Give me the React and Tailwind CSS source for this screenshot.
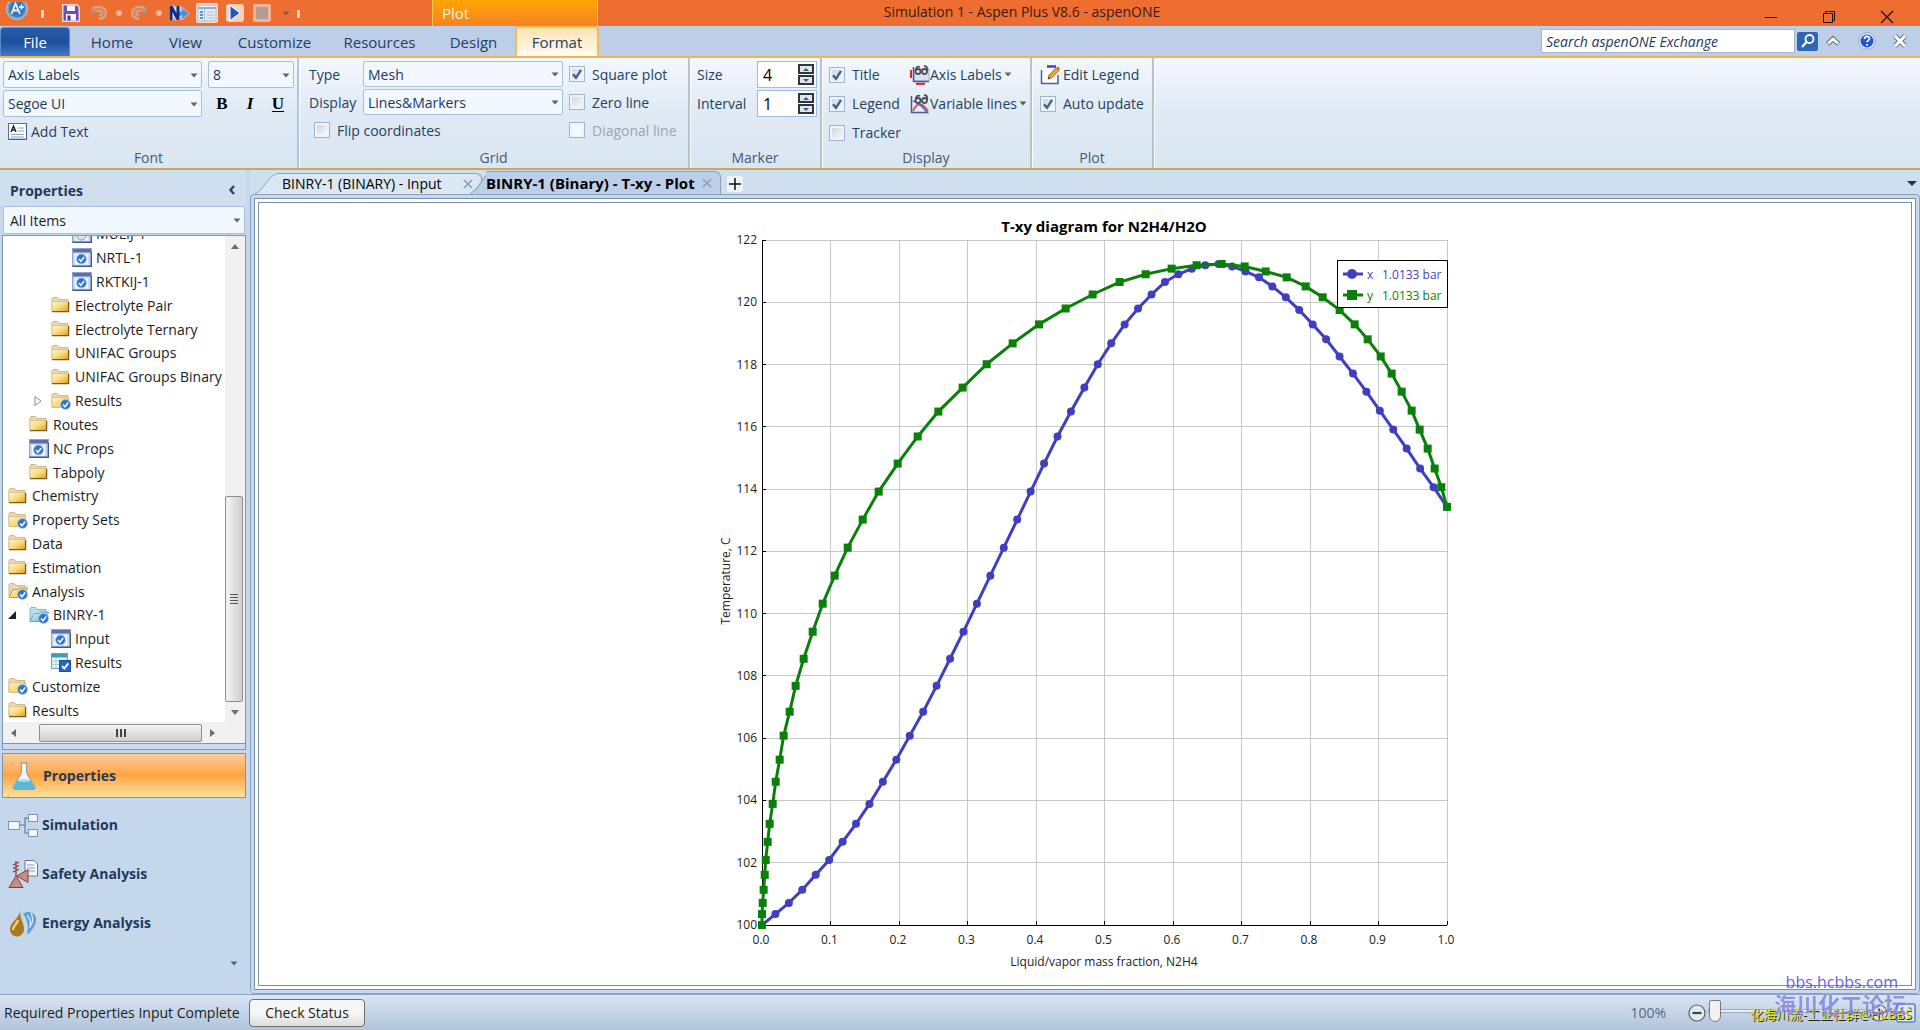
import React from "react";

/* ---------- plot data ---------- */
const TEMPS = [
  100, 100.35, 100.71, 101.13, 101.61, 102.09, 102.67, 103.25, 103.89, 104.6, 105.31, 106.08, 106.85,
  107.68, 108.55, 109.42, 110.32, 111.22, 112.12, 113.02, 113.92, 114.82, 115.69, 116.49, 117.26,
  118.01, 118.68, 119.29, 119.8, 120.25, 120.65, 120.9, 121.08, 121.19, 121.23, 121.15, 120.99,
  120.8, 120.51, 120.16, 119.75, 119.29, 118.81, 118.26, 117.71, 117.13, 116.52, 115.91, 115.3,
  114.66, 114.06, 113.43,
];
const Y_FRACTIONS = [
  0, 0, 0.001, 0.0024, 0.004, 0.0054, 0.0083, 0.0112, 0.0156, 0.02, 0.0258, 0.0316, 0.0404, 0.0491,
  0.0608, 0.074, 0.0886, 0.1061, 0.1251, 0.147, 0.1703, 0.1981, 0.2273, 0.2574, 0.2929, 0.328,
  0.3659, 0.4044, 0.4433, 0.4827, 0.5221, 0.5601, 0.598, 0.6345, 0.671, 0.7046, 0.7353, 0.766,
  0.7937, 0.8185, 0.8433, 0.8652, 0.8842, 0.9032, 0.9192, 0.9338, 0.9484, 0.9601, 0.9718, 0.982,
  0.9917, 1,
];
const LEFT = 42;
const TOP = 37;
const SIDE = 685;
const px = (f) => LEFT + f * SIDE;
const py = (t) => TOP + ((122 - t) / 22) * SIDE;
const LIQUID = TEMPS.map((t, i) => [px(i / 51), py(t)]);
const VAPOR = TEMPS.map((t, i) => [px(Y_FRACTIONS[i]), py(t)]);
const toPoints = (s) => s.map((p) => p.join(",")).join(" ");
const TICKS_X = [0, 1, 2, 3, 4, 5, 6, 7, 8, 9, 10];
const TICKS_Y = [100, 102, 104, 106, 108, 110, 112, 114, 116, 118, 120, 122];

function Chart() {
  return (
    <svg viewBox="0 0 730 782" className="h-full w-full" role="img" aria-label="T-xy diagram for N2H4/H2O">
      <text x="384" y="29" textAnchor="middle" fontSize="15" fontWeight="700" fill="#000">
        T-xy diagram for N2H4/H2O
      </text>
      <g stroke="#c8c8c8" strokeWidth="1" shapeRendering="crispEdges">
        {TICKS_X.slice(1).map((n) => (
          <line key={n} x1={px(n / 10)} x2={px(n / 10)} y1={TOP} y2={TOP + SIDE} />
        ))}
        {TICKS_Y.slice(1).map((t) => (
          <line key={t} x1={LEFT} x2={LEFT + SIDE} y1={py(t)} y2={py(t)} />
        ))}
      </g>
      <g stroke="#000" strokeWidth="1" shapeRendering="crispEdges">
        <line x1={LEFT} x2={LEFT} y1={TOP} y2={TOP + SIDE} />
        <line x1={LEFT} x2={LEFT + SIDE} y1={TOP + SIDE} y2={TOP + SIDE} />
        {TICKS_X.map((n) => (
          <line key={n} x1={px(n / 10)} x2={px(n / 10)} y1={TOP + SIDE - 4} y2={TOP + SIDE} />
        ))}
        {TICKS_Y.map((t) => (
          <line key={t} x1={LEFT} x2={LEFT + 4} y1={py(t)} y2={py(t)} />
        ))}
      </g>
      <g fontSize="12" fill="#222">
        {TICKS_Y.map((t) => (
          <text key={t} x={LEFT - 5} y={py(t) + 4} textAnchor="end">
            {t}
          </text>
        ))}
        {TICKS_X.map((n) => (
          <text key={n} x={px(n / 10) - 1} y={TOP + SIDE + 19} textAnchor="middle">
            {(n / 10).toFixed(1)}
          </text>
        ))}
      </g>
      <text x="384" y="763" textAnchor="middle" fontSize="12" fill="#222">
        Liquid/vapor mass fraction, N2H4
      </text>
      <text transform="translate(10 378) rotate(-90)" textAnchor="middle" fontSize="12" fill="#222">
        Temperature, C
      </text>
      <g fill="#3f3fbf" stroke="none">
        <polyline points={toPoints(LIQUID)} fill="none" stroke="#3f3fbf" strokeWidth="3" />
        {LIQUID.map(([x, y], i) => (
          <circle key={i} cx={x} cy={y} r="4" />
        ))}
      </g>
      <g fill="#0a800a">
        <polyline points={toPoints(VAPOR)} fill="none" stroke="#0a800a" strokeWidth="3" />
        {VAPOR.map(([x, y], i) => (
          <rect key={i} x={x - 4} y={y - 4} width="8" height="8" />
        ))}
      </g>
      <rect x="617.5" y="57.5" width="110" height="47" fill="#fff" stroke="#000" />
      <g strokeWidth="3" fontSize="12">
        <line x1="623" x2="643" y1="71" y2="71" stroke="#3f3fbf" />
        <circle cx="632" cy="71" r="5" fill="#3f3fbf" />
        <text x="647" y="76" fill="#3f3fbf">x</text>
        <text x="662" y="76" fill="#3f3fbf">1.0133 bar</text>
        <line x1="623" x2="643" y1="92" y2="92" stroke="#0a800a" />
        <rect x="627" y="87" width="10" height="10" fill="#0a800a" />
        <text x="647" y="97" fill="#0a800a">y</text>
        <text x="662" y="97" fill="#0a800a">1.0133 bar</text>
      </g>
    </svg>
  );
}

/* ---------- small controls ---------- */
function Arrow({ className = "" }) {
  return (
    <svg viewBox="0 0 8 5" className={"h-[5px] w-2 " + className} aria-hidden="true">
      <path d="M0.5 0.5h7L4 4.5z" fill="currentColor" />
    </svg>
  );
}

function Combo({ label, value, className, text = "pl-1 text-[#1e395b]" }) {
  return (
    <div className={"relative " + className}>
      <select
        aria-label={label}
        defaultValue={value}
        className={"h-full w-full appearance-none rounded-xs border border-[#a9bfdb] bg-[#f1f8fe] " + text}
      >
        <option>{value}</option>
      </select>
      <Arrow className="pointer-events-none absolute right-1 top-1/2 -mt-0.5 text-[#5a6472]" />
    </div>
  );
}

function Check({ label, checked = false, disabled = false, className = "" }) {
  return (
    <label className={"flex items-center gap-[7px] whitespace-nowrap " + (disabled ? "text-[#9aa5b3] " : "") + className}>
      <span className="relative flex h-4 w-4 items-center justify-center">
        <input
          type="checkbox"
          defaultChecked={checked}
          disabled={disabled}
          className="peer h-4 w-4 appearance-none border border-[#9fb4cf] bg-linear-to-br from-[#c9d1da] to-white shadow-[inset_0_0_0_2px_#eef4fa] disabled:bg-none disabled:bg-[#f5f7f9]"
        />
        <svg viewBox="0 0 16 16" className="pointer-events-none absolute hidden h-4 w-4 peer-checked:block" aria-hidden="true">
          <path d="M4 8.2 7 11.8 12 3.8" fill="none" stroke="#3f6290" strokeWidth="2.4" />
        </svg>
      </span>
      {label}
    </label>
  );
}

function Spin({ label, value }) {
  return (
    <div className="flex h-[27px] w-[60px] border border-[#9dbbe0] bg-white">
      <input
        aria-label={label}
        defaultValue={value}
        className="min-w-0 flex-1 bg-transparent pl-[5px] text-base text-black outline-none"
      />
      <div className="mr-0.5 flex w-4 shrink-0 flex-col justify-between py-0.5">
        {["M1 4 4 1l3 3z", "M1 1h6L4 4z"].map((d, i) => (
          <button
            key={d}
            aria-label={label + (i ? " down" : " up")}
            className="flex h-2.5 w-4 items-center justify-center border-2 border-[#2c3540] bg-[#dfe6ee]"
          >
            <svg viewBox="0 0 8 5" className="h-[5px] w-2 shrink-0">
              <path d={d} fill="#4d5866" />
            </svg>
          </button>
        ))}
      </div>
    </div>
  );
}

function Group({ title, className, children }) {
  return (
    <section
      aria-label={title}
      className={"flex shrink-0 flex-col border-r-2 border-[#b4c3d6] shadow-[1px_0_0_#fbfdff] " + className}
    >
      <div className="flex-1">{children}</div>
      <div className="h-5 text-center leading-5 text-[#46597a]">{title}</div>
    </section>
  );
}

/* ---------- icons ---------- */
function Folder({ open, checked, blue }) {
  const id = blue ? "folderBlue" : checked ? "folderPale" : "folderGold";
  return (
    <svg viewBox="0 0 20 18" className="h-[18px] w-5" aria-hidden="true">
      <defs>
        <linearGradient id={id} x1="0" y1="0" x2="1" y2="1">
          <stop offset="0" stopColor={blue ? "#d8f2f8" : "#fff6d0"} />
          <stop offset="0.5" stopColor={blue ? "#9fd6e6" : "#fadb7c"} />
          <stop offset="1" stopColor={blue ? "#57a5bd" : checked ? "#ecc75c" : "#e29c14"} />
        </linearGradient>
      </defs>
      <path d="M1 15V2.500l1-1h4.500l1.500 2h9V15z" fill={blue ? "#b9e0ea" : "#e6d9b4"} stroke={blue ? "#6fa9bb" : "#c0ad7e"} strokeWidth="0.800" />
      {open ? (
        <path d="M1 15.500 5 7.500h5l1-1.500h8.500l-3 9.500z" fill={"url(#" + id + ")"} stroke={blue ? "#5c9cb0" : "#b08c3c"} strokeWidth="0.800" />
      ) : (
        <path d="M1 15.500V5.500h16.500v10z" fill={"url(#" + id + ")"} stroke="#cbb06c" strokeWidth="0.600" />
      )}
      {!open && !checked && <path d="M1 15.700h16.600V6" fill="none" stroke="#7c5c1a" strokeWidth="1.300" />}
      {checked && <CheckDot cx={14.5} cy={12.5} />}
    </svg>
  );
}

function CheckDot({ cx, cy }) {
  return (
    <g>
      <circle cx={cx} cy={cy} r="5" fill="#2f74cf" stroke="#a9c9ef" strokeWidth="0.8" />
      <path d={`M${cx - 2.5} ${cy} l2 2.300 3.200-4.300`} fill="none" stroke="#fff" strokeWidth="1.500" />
    </g>
  );
}

function FormIcon({ muted }) {
  return (
    <svg viewBox="0 0 20 19" className="h-[19px] w-5" aria-hidden="true">
      <rect x="0.500" y="0.500" width="19" height="18" fill="#c9d9f2" stroke="#8fa3cb" />
      <rect x="1" y="1" width="18" height="3.500" fill="#5f6fae" />
      <path d="M0.500 18.300h18.800V4" fill="none" stroke="#3f5a8a" strokeWidth="1.400" />
      <rect x="3" y="6" width="13" height="10.500" fill="#f4f8ff" />
      {muted ? <circle cx="9.500" cy="11" r="5" fill="#e2e2e2" stroke="#9a9a9a" /> : <CheckDot cx={9.5} cy={11} />}
    </svg>
  );
}

function TableIcon() {
  return (
    <svg viewBox="0 0 20 19" className="h-[19px] w-5" aria-hidden="true">
      <rect x="0.500" y="0.500" width="16" height="15" fill="#e6f6f8" stroke="#6fa2b4" />
      <rect x="1" y="1" width="15" height="3.500" fill="#3f9fae" />
      <path d="M5 4v11M1 8h15M1 11.500h15" stroke="#a9d0da" />
      <rect x="8.500" y="7.500" width="11" height="11" fill="#2668c0" stroke="#1b4f9a" />
      <path d="m11 13 2.300 2.600 4-5.200" fill="none" stroke="#fff" strokeWidth="1.800" />
    </svg>
  );
}

/* ---------- title bar ---------- */
function QuickAccess() {
  const btn = "flex h-[22px] items-center justify-center";
  return (
    <div className="flex h-full w-[432px] shrink-0 items-center">
      <button aria-label="Application menu" className={btn + " w-[34px]"}>
        <svg viewBox="0 0 24 22" className="h-[22px] w-6">
          <circle cx="12" cy="7" r="10.500" fill="#6f9fca" stroke="#b3cfe6" />
          <circle cx="12" cy="7" r="8" fill="#3d78b4" />
          <path d="M6.500 12 10.500 1.500l4.500 10.500M8 8.500h5" fill="none" stroke="#e8f3fb" strokeWidth="1.800" />
          <path d="M16.500 2.500v5M14 5h5" stroke="#fff" strokeWidth="1.400" />
        </svg>
      </button>
      <span className="mb-2 ml-[7px] h-2 w-[3px] self-end bg-[#f6d9cb]" />
      <button aria-label="Save" className={btn + " ml-[17px] w-5"}>
        <svg viewBox="0 0 20 20" className="h-5 w-5">
          <path d="M1 1h15l3 3v15H1z" fill="#f8d9cc" />
          <path d="M2.500 2.500h13l2 2v13h-15z" fill="#6a4fb4" />
          <path d="M6 2.500h8V8H6z" fill="#f4f2fc" />
          <path d="M5 11h10v6.500H5z" fill="#f7f7fc" />
          <path d="M6.500 12.500h3v5h-3z" fill="#4a3596" />
        </svg>
      </button>
      <button aria-label="Undo" className={btn + " ml-2 w-5"}>
        <svg viewBox="0 0 20 20" className="h-5 w-5">
          <path d="M4 8c4-4 11-2 11 2 0 3-3 4-5 4" fill="none" stroke="#f39b75" strokeWidth="6" />
          <path d="M4 8c4-4 11-2 11 2 0 3-3 4-5 4M3 4v5h5" fill="none" stroke="#b5907f" strokeWidth="2.200" />
        </svg>
      </button>
      <span className="ml-2 h-1 w-1 rounded-full bg-[#f3c5b0] ring-1 ring-[#f3a585]" />
      <button aria-label="Redo" className={btn + " ml-2 w-5"}>
        <svg viewBox="0 0 20 20" className="h-5 w-5">
          <path d="M16 8C12 4 5 6 5 10c0 3 3 4 5 4" fill="none" stroke="#f39b75" strokeWidth="6" />
          <path d="M16 8C12 4 5 6 5 10c0 3 3 4 5 4M17 4v5h-5" fill="none" stroke="#b5907f" strokeWidth="2.200" />
        </svg>
      </button>
      <span className="ml-2 h-1 w-1 rounded-full bg-[#f3c5b0] ring-1 ring-[#f3a585]" />
      <button aria-label="Next" className={btn + " ml-2 w-5"}>
        <svg viewBox="0 0 20 20" className="h-5 w-5">
          <path d="M2 17.500V3l7 13.500V3" fill="none" stroke="#f8d8cc" strokeWidth="5.500" />
          <path d="M9 8h4V4l7 6.500-7 6.500v-4H9z" fill="#4b8fe0" stroke="#d4e6fa" strokeWidth="0.700" />
          <path d="M2 17.500V3l7 13.500V3" fill="none" stroke="#0b2f86" strokeWidth="3" />
        </svg>
      </button>
      <button aria-label="Control panel" className={btn + " ml-[7px] w-[22px]"}>
        <svg viewBox="0 0 22 20" className="h-5 w-[22px]">
          <rect x="0" y="0" width="22" height="20" rx="2" fill="#fbd9ca" />
          <rect x="2" y="2" width="18" height="16" fill="#e3edf6" stroke="#a7bdd4" />
          <path d="M2 5h18" stroke="#8fb0d4" strokeWidth="2" />
          <path d="M8.500 6v12M11 9h7M11 12h7M11 15h7" stroke="#a9bccf" />
          <path d="M4 9h3M4 12h3M4 15h3" stroke="#3f6fae" strokeWidth="1.500" />
        </svg>
      </button>
      <button aria-label="Run" className={btn + " ml-[7px] w-5"}>
        <svg viewBox="0 0 20 22" className="h-[22px] w-5">
          <rect x="1" y="2" width="18" height="18" rx="3" fill="#f8d0be" />
          <path d="M5 3.500 15 11 5 18.500z" fill="#1f56c8" stroke="#fff" strokeWidth="1" />
        </svg>
      </button>
      <button aria-label="Stop" className={btn + " ml-[7px] w-5"}>
        <svg viewBox="0 0 20 20" className="h-5 w-5">
          <rect x="1" y="1" width="18" height="18" rx="2" fill="#f3b59a" />
          <rect x="4" y="4" width="12" height="12" fill="#b39c92" />
        </svg>
      </button>
      <button aria-label="Customize toolbar" className={btn + " ml-2 w-3 text-[#9c5534]"}>
        <Arrow />
      </button>
      <span className="mb-2 ml-[5px] h-2 w-[3px] self-end bg-[#f6d9cb]" />
    </div>
  );
}

function TitleBar() {
  const btn = "flex h-full w-[58px] items-end justify-center pb-0.5";
  return (
    <header className="flex h-[26px] shrink-0 bg-[#ee6e31]">
      <QuickAccess />
      <div className="w-[166px] shrink-0 border-x border-[#ffc845] bg-linear-to-b from-[#ffa500] to-[#f58220] pl-[9px] text-[15px] leading-[26px] text-[#fff3dc]">
        Plot
      </div>
      <h1 className="flex-1 whitespace-nowrap pr-[296px] text-center text-[14px] leading-6 text-[#3a1a0c]">
        Simulation 1 - Aspen Plus V8.6 - aspenONE
      </h1>
      <div className="flex pr-1">
        <button aria-label="Minimize" className={btn}>
          <svg viewBox="0 0 14 14" className="h-3.5 w-3.5"><path d="M1 7.500h12" stroke="#1a0a04" /></svg>
        </button>
        <button aria-label="Restore" className={btn}>
          <svg viewBox="0 0 14 14" className="h-3.5 w-3.5">
            <path d="M1.500 3.500h9v9h-9zM3.500 3.500v-2h9v9h-2" fill="none" stroke="#1a0a04" />
          </svg>
        </button>
        <button aria-label="Close window" className={btn}>
          <svg viewBox="0 0 14 14" className="h-3.5 w-3.5"><path d="m1 1 12 12M13 1 1 13" stroke="#1a0a04" strokeWidth="1.200" /></svg>
        </button>
      </div>
    </header>
  );
}

function TabRow() {
  const tab = "h-full pt-0.5 text-center";
  return (
    <nav className="flex h-[30px] shrink-0 items-stretch bg-[#bdcee8] text-[15px] text-[#26405f]">
      <button className="mt-[1px] w-[70px] rounded-t-sm border border-b-0 border-[#5e8ccb] bg-linear-to-b from-[#2a5ca8] via-[#1d4f9d] to-[#3f7cc8] text-white">
        File
      </button>
      <button className={tab + " ml-1 w-[76px]"}>Home</button>
      <button className={tab + " w-[71px]"}>View</button>
      <button className={tab + " w-[107px]"}>Customize</button>
      <button className={tab + " w-[103px]"}>Resources</button>
      <button className={tab + " w-[84px] border-l border-[#d9cbb0]"}>Design</button>
      <button className="h-full w-[84px] rounded-t-sm border-2 border-b-0 border-[#f3bd55] bg-linear-to-b from-[#fbe3ae] to-[#fdfbf4] text-center">
        Format
      </button>
      <div className="flex flex-1 items-center justify-end gap-0.5 pr-3">
        <input
          aria-label="Search aspenONE Exchange"
          placeholder="Search aspenONE Exchange"
          className="h-6 w-[254px] border border-[#a9b6c6] bg-white pl-1 text-[14px] italic text-[#1e395b] placeholder:text-[#1e395b]"
        />
        <button aria-label="Search" className="flex h-[19px] w-[21px] items-center justify-center rounded-xs bg-[#2e68b4]">
          <svg viewBox="0 0 16 16" className="h-4 w-4">
            <circle cx="9.500" cy="6" r="4" fill="none" stroke="#fff" strokeWidth="1.800" />
            <path d="M6.500 9 2 14" stroke="#fff" strokeWidth="2.200" />
          </svg>
        </button>
        <button aria-label="Collapse ribbon" className="ml-1.5 flex w-3.5 justify-center">
          <svg viewBox="0 0 14 12" className="h-3 w-3.5 shrink-0">
            <path d="m1.500 9 5.500-5 5.500 5" fill="none" stroke="#6d7785" strokeWidth="5" />
            <path d="m2 8.500 5-4.500 5 4.500" fill="none" stroke="#fff" strokeWidth="2.500" />
          </svg>
        </button>
        <button aria-label="Help" className="ml-4 flex">
          <svg viewBox="0 0 18 18" className="h-[18px] w-[18px]">
            <circle cx="9" cy="9" r="8.300" fill="#e4edf8" stroke="#8fa9cf" />
            <circle cx="9" cy="9" r="6.500" fill="#2456d0" />
            <path d="M6.500 7c0-3.500 5-3.300 5-.4 0 1.800-2.400 1.800-2.400 3.700M9.100 12v1.700" fill="none" stroke="#fff" strokeWidth="1.700" />
          </svg>
        </button>
        <button aria-label="Close document" className="ml-3.5 flex">
          <svg viewBox="0 0 16 14" className="h-3.5 w-4">
            <path d="m3 2 10 10M13 2 3 12" stroke="#6d7785" strokeWidth="5" />
            <path d="m3 2 10 10M13 2 3 12" stroke="#fff" strokeWidth="3" />
          </svg>
        </button>
      </div>
    </nav>
  );
}

/* ---------- ribbon ---------- */
function Glasses() {
  return (
    <g fill="#e8ecf2" stroke="#4a4f58" strokeWidth="1.800">
      <circle cx="8" cy="6.500" r="2.500" />
      <circle cx="14.500" cy="6.500" r="2.500" />
      <path d="M6 5c0-3 2-4 4-3M17 5.500c1-3-1-5-3-4" fill="none" />
    </g>
  );
}

function Ribbon() {
  const sel = "h-[27px]";
  return (
    <div className="flex h-[114px] shrink-0 border-y-2 border-t-[#eeb64b] border-b-[#cfa653] bg-linear-to-b from-[#f2f8fe] via-[#dfeaf5] to-[#dbe6f3] text-[14px] text-[#26405f]">
      <Group title="Font" className="w-[299px]">
        <div className="grid grid-cols-[199px_86px] gap-x-[6px] gap-y-0.5 pl-[3px] pt-[3px]">
          <Combo label="Text element" value="Axis Labels" className={sel} />
          <Combo label="Font size" value="8" className={sel} />
          <Combo label="Font family" value="Segoe UI" className={sel} />
          <div className="flex items-center justify-around pr-0.5 font-['Liberation_Serif'] text-[17px] font-bold text-black">
            <button aria-label="Bold" className="w-6">B</button>
            <button aria-label="Italic" className="w-6 italic">I</button>
            <button aria-label="Underline" className="w-6 underline underline-offset-2">U</button>
          </div>
        </div>
        <button className="ml-2 mt-[3px] flex h-[22px] items-center gap-1">
          <svg viewBox="0 0 19 17" className="h-[17px] w-[19px]" aria-hidden="true">
            <rect x="0.500" y="0.500" width="18" height="16" fill="#fff" stroke="#54719c" />
            <path d="m3 9 2.500-6L8 9M4 7h3" fill="none" stroke="#222" strokeWidth="1.400" />
            <path d="M10 5h6M10 8h6M3 11.500h13M3 14h13" stroke="#8ba2c4" />
            <path d="M1 16.200h17.500V1" fill="none" stroke="#3f5a86" />
          </svg>
          Add Text
        </button>
      </Group>
      <Group title="Grid" className="w-[391px]">
        <div className="flex gap-1.5 pl-2.5 pt-[3px]">
          <div className="flex flex-col gap-0.5">
            <div className="flex h-[26px] items-center">
              <span className="w-[54px]">Type</span>
              <Combo label="Type" value="Mesh" className="h-[26px] w-[200px]" />
            </div>
            <div className="flex h-[26px] items-center">
              <span className="w-[54px]">Display</span>
              <Combo label="Display" value="Lines&amp;Markers" className="h-[26px] w-[200px]" />
            </div>
            <Check label="Flip coordinates" className="ml-[5px] h-[26px]" />
          </div>
          <div className="flex flex-col gap-0.5">
            <Check label="Square plot" checked className="h-[26px]" />
            <Check label="Zero line" className="h-[26px]" />
            <Check label="Diagonal line" disabled className="h-[26px]" />
          </div>
        </div>
      </Group>
      <Group title="Marker" className="w-[132px]">
        <div className="flex flex-col gap-0.5 pl-[7px] pt-[3px]">
          <div className="flex items-center"><span className="w-[60px]">Size</span><Spin label="Size" value="4" /></div>
          <div className="flex items-center"><span className="w-[60px]">Interval</span><Spin label="Interval" value="1" /></div>
        </div>
      </Group>
      <Group title="Display" className="w-[210px]">
        <div className="grid grid-cols-[81px_1fr] gap-y-0.5 pl-[7px] pt-[3px]">
          <Check label="Title" checked className="h-[27px]" />
          <button className="flex h-[27px] items-center whitespace-nowrap">
            <svg viewBox="0 0 20 20" className="h-5 w-5 shrink-0" aria-hidden="true">
              <rect x="4" y="4" width="15" height="12" fill="#d9e0f0" stroke="#a3aecb" />
              <path d="M1 5v8" stroke="#e02020" strokeWidth="2" />
              <path d="M6 18.800h9" stroke="#e02020" strokeWidth="2" />
              <path d="M3.500 2v14.500H19" fill="none" stroke="#4a5890" strokeWidth="1.500" />
              <Glasses />
            </svg>
            Axis Labels
            <Arrow className="ml-0.5 text-[#5f6b52]" />
          </button>
          <Check label="Legend" checked className="h-[27px]" />
          <button className="flex h-[27px] items-center whitespace-nowrap">
            <svg viewBox="0 0 20 20" className="h-5 w-5 shrink-0" aria-hidden="true">
              <rect x="1" y="2" width="17" height="16" fill="#e9edf8" />
              <path d="M3 17C7 8 12 8 18 17" fill="none" stroke="#e05050" strokeWidth="1.800" />
              <path d="M3 7c5 1 9 5 14 11" fill="none" stroke="#4a62c8" strokeWidth="1.500" />
              <path d="M1.500 2v16.500h17" fill="none" stroke="#4a5890" strokeWidth="1.500" />
              <Glasses />
            </svg>
            Variable lines
            <Arrow className="ml-0.5 text-[#4f6b2f]" />
          </button>
          <Check label="Tracker" className="h-[27px]" />
        </div>
      </Group>
      <Group title="Plot" className="w-[122px]">
        <div className="flex flex-col gap-0.5 pl-2 pt-[3px]">
          <button className="flex h-[27px] items-center gap-[3px] whitespace-nowrap">
            <svg viewBox="0 0 20 20" className="h-5 w-5" aria-hidden="true">
              <rect x="1" y="3" width="16" height="15" fill="#fbfcff" />
              <path d="M1.500 5v13.500H18V10" fill="none" stroke="#4a5ea8" strokeWidth="1.500" />
              <path d="M7 1.500h9" stroke="#2f45d8" strokeWidth="2.500" />
              <path d="m8 14 1-4 7-7 3 2.500-7.500 7.500z" fill="#f0a03c" stroke="#9a5a20" strokeWidth="0.800" />
              <path d="m16 3 3 2.500 1-2-2-2z" fill="#d86050" />
              <path d="m8 14 .6-2 1.500 1.300z" fill="#222" />
            </svg>
            Edit Legend
          </button>
          <Check label="Auto update" checked className="h-[27px]" />
        </div>
      </Group>
    </div>
  );
}

/* ---------- sidebar ---------- */
const TREE = [
  { level: 3, icon: <FormIcon muted />, label: "MULIJ-1" },
  { level: 3, icon: <FormIcon />, label: "NRTL-1" },
  { level: 3, icon: <FormIcon />, label: "RKTKIJ-1" },
  { level: 2, icon: <Folder />, label: "Electrolyte Pair" },
  { level: 2, icon: <Folder />, label: "Electrolyte Ternary" },
  { level: 2, icon: <Folder />, label: "UNIFAC Groups" },
  { level: 2, icon: <Folder />, label: "UNIFAC Groups Binary" },
  { level: 2, icon: <Folder checked />, label: "Results", expander: "closed" },
  { level: 1, icon: <Folder />, label: "Routes" },
  { level: 1, icon: <FormIcon />, label: "NC Props" },
  { level: 1, icon: <Folder />, label: "Tabpoly" },
  { level: 0, icon: <Folder />, label: "Chemistry" },
  { level: 0, icon: <Folder checked />, label: "Property Sets" },
  { level: 0, icon: <Folder />, label: "Data" },
  { level: 0, icon: <Folder />, label: "Estimation" },
  { level: 0, icon: <Folder checked open />, label: "Analysis" },
  { level: 1, icon: <Folder checked open blue />, label: "BINRY-1", expander: "open" },
  { level: 2, icon: <FormIcon />, label: "Input" },
  { level: 2, icon: <TableIcon />, label: "Results" },
  { level: 0, icon: <Folder checked />, label: "Customize" },
  { level: 0, icon: <Folder />, label: "Results" },
];
const INDENT = ["pl-[5px]", "pl-1", "pl-[26px]", "pl-[47px]"];

function TreeRow({ level, icon, label, expander }) {
  return (
    <li className={"flex min-h-0 flex-1 items-center whitespace-nowrap " + INDENT[level]}>
      {level > 0 && (
        <span className={"flex w-[22px] " + (expander === "open" ? "justify-start" : "pl-1")}>
          {expander && (
            <button aria-label={"Toggle " + label}>
              <svg viewBox="0 0 10 10" className="h-2.5 w-2.5">
                {expander === "open" ? (
                  <path d="M9 1v8H1z" fill="#222" />
                ) : (
                  <path d="M2 0.500v9l6-4.500z" fill="#fff" stroke="#8a8a8a" />
                )}
              </svg>
            </button>
          )}
        </span>
      )}
      <button className="flex items-center gap-1">
        {icon}
        {label}
      </button>
    </li>
  );
}

function Sidebar() {
  const nav = "flex h-[45px] w-full items-center gap-1 pl-1.5 text-left";
  const scrollBtn = "flex h-5 w-5 shrink-0 items-center justify-center";
  return (
    <aside className="flex w-[250px] shrink-0 flex-col bg-[#c5d7eb] pr-1">
      <div className="flex h-9 shrink-0 items-center justify-between bg-[#cfdfee] pl-2.5 pr-2.5 pt-1">
        <h2 className="text-[14px] font-bold text-[#1e395b]">Properties</h2>
        <button aria-label="Collapse pane">
          <svg viewBox="0 0 8 10" className="h-2.5 w-2"><path d="M6 1 2.500 5 6 9" fill="none" stroke="#39424f" strokeWidth="2.400" /></svg>
        </button>
      </div>
      <Combo label="Items" value="All Items" className="ml-[3px] h-7 w-[242px] shrink-0 text-[14px]" text="pl-1.5 text-[#1c1c1c]" />
      <div className="ml-0.5 mt-[1px] flex min-h-0 flex-1 flex-col border border-[#7f97b5] bg-[#f1f1f1] text-[14px] text-[#1c1c1c]">
        <div className="flex min-h-0 flex-1">
          <div className="flex min-w-0 flex-1 flex-col overflow-hidden bg-white">
            <ul className="-mt-3.5 flex min-h-0 flex-1 flex-col">
              {TREE.map((n, i) => (
                <TreeRow key={i} {...n} />
              ))}
            </ul>
          </div>
          <div className="flex w-5 flex-col items-center">
            <button aria-label="Scroll up" className={scrollBtn}>
              <svg viewBox="0 0 8 5" className="h-[5px] w-2"><path d="M4 0 8 5H0z" fill="#6d6d6d" /></svg>
            </button>
            <div className="flex min-h-0 w-full flex-1 flex-col">
              <div className="flex-[240]" />
              <div className="flex w-[18px] flex-[204] flex-col items-center justify-center gap-0.5 rounded-xs border border-[#8e8e8e] bg-linear-to-r from-[#f4f4f4] to-[#cfcfcf]">
                <i className="h-px w-2 bg-[#555]" />
                <i className="h-px w-2 bg-[#555]" />
                <i className="h-px w-2 bg-[#555]" />
                <i className="h-px w-2 bg-[#555]" />
              </div>
            </div>
            <button aria-label="Scroll down" className={scrollBtn}>
              <svg viewBox="0 0 8 5" className="h-[5px] w-2"><path d="M0 0h8L4 5z" fill="#6d6d6d" /></svg>
            </button>
          </div>
        </div>
        <div className="flex h-[21px] shrink-0 items-center pr-[23px]">
          <button aria-label="Scroll left" className={scrollBtn}>
            <svg viewBox="0 0 5 8" className="h-2 w-[5px]"><path d="M5 0v8L0 4z" fill="#6d6d6d" /></svg>
          </button>
          <div className="ml-4 flex h-[18px] flex-1 items-center justify-center gap-0.5 rounded-xs border border-[#8e8e8e] bg-linear-to-b from-[#f4f4f4] to-[#cfcfcf]">
            <i className="h-2 w-0.5 bg-[#444]" />
            <i className="h-2 w-0.5 bg-[#444]" />
            <i className="h-2 w-0.5 bg-[#444]" />
          </div>
          <button aria-label="Scroll right" className={scrollBtn}>
            <svg viewBox="0 0 5 8" className="h-2 w-[5px]"><path d="M0 0v8l5-4z" fill="#6d6d6d" /></svg>
          </button>
        </div>
      </div>
      <div className="ml-0.5 h-[6px] shrink-0 border border-t-0 border-[#7f97b5] bg-[#cbdcf0]" />
      <nav className="ml-0.5 mt-[3px] flex h-[241px] shrink-0 flex-col gap-1 text-[14px] font-bold text-[#1e395b]">
        <button className={nav + " border border-[#7d94ad] bg-linear-to-b from-[#fccb9d] from-0% via-[#fea63e] via-50% to-[#fee09a] to-100%"}>
          <svg viewBox="0 0 30 30" className="h-[30px] w-[30px]" aria-hidden="true">
            <path d="M11 2h8M12.500 3v9L4 26c0 2 1 2.500 2 2.500h18c1.500 0 2.500-1 2-2.500L17.500 12V3" fill="#f3f6f8" stroke="#8e9aa3" />
            <path d="M8.500 19h13l4.500 8c0 1-1 1.500-2 1.500H6c-1 0-2-.5-2-1.500z" fill="#59b9d6" />
            <ellipse cx="15" cy="19.500" rx="6.300" ry="1.500" fill="#a5e1f0" />
          </svg>
          Properties
        </button>
        <button className={nav}>
          <svg viewBox="0 0 30 30" className="h-[30px] w-[30px]" aria-hidden="true">
            <g fill="#f2f6fc" stroke="#7c93b8">
              <path d="M11 15h6M22 8h-5v15h5" fill="none" strokeWidth="1.600" />
              <rect x="0.500" y="11.500" width="11" height="8" />
              <rect x="20.500" y="4.500" width="9" height="7" />
              <rect x="20.500" y="19.500" width="9" height="7" />
            </g>
          </svg>
          Simulation
        </button>
        <button className={nav}>
          <svg viewBox="0 0 30 30" className="h-[30px] w-[30px]" aria-hidden="true">
            <path d="M17 1.500h9l3.500 3.500v12H17z" fill="#f7f9fc" stroke="#66788f" />
            <path d="M19 6h7M19 9h8M19 12h8" stroke="#8a9bb4" />
            <g fill="#c98c88" stroke="#8a3d3d">
              <path d="M8 17 1 28.500h14z" />
              <path d="M9 17l11-6.500v13z" />
              <path d="M8 17V2M5 6l6-3M5 9.500l6-3M5 13l6-3" fill="none" strokeWidth="1.300" />
            </g>
          </svg>
          Safety Analysis
        </button>
        <button className={nav}>
          <svg viewBox="0 0 30 30" className="h-[30px] w-[30px]" aria-hidden="true">
            <path d="M19 27c6-5 10-12 9-17-1-6-9-8-13-4 3 3 5 10 5 14z" fill="#5f9cdc" />
            <path d="M19 7c3 3 4 8 3 13M23 5c2 4 2 9 0 12" fill="none" stroke="#d5e8fa" strokeWidth="1.400" />
            <path d="M12 3C11 11 2 14 2 21c0 5 4 7.500 7 7.500s7-2.500 7-7.500c0-6-4-10-4-18z" fill="#a9781f" />
            <path d="M10 12c-1 4-5 6-5 10" fill="none" stroke="#f0cf7c" strokeWidth="2.400" />
          </svg>
          Energy Analysis
        </button>
        <button aria-label="More environments" className="mr-2 mt-3 self-end text-[#3d6aa3]">
          <Arrow />
        </button>
      </nav>
    </aside>
  );
}

/* ---------- document area ---------- */
function DocTab({ label, active }) {
  const fill = active ? "#bccfe8" : "#dbe7f3";
  return (
    <div className={"relative flex items-stretch " + (active ? "-ml-3 h-[23px] font-bold" : "h-[21px]")}>
      <svg viewBox="0 0 24 22" preserveAspectRatio="none" className="h-full w-6" aria-hidden="true">
        <path d="M0 22C8 20 12 1 24 0.500V22z" fill={fill} />
        <path d="M0 21.500C9 19 13 1 24 0.500" fill="none" stroke="#8ba1bc" />
      </svg>
      <div
        className={
          "flex items-center justify-between rounded-tr-md border-r border-t border-[#8ba1bc] text-black " +
          (active ? "-ml-2 w-[235px] bg-[#bccfe8] pr-2 text-[15px]" : "w-[203px] bg-[#dbe7f3] pl-[3px] pr-2 text-[14px]")
        }
      >
        <button className="whitespace-nowrap leading-4">{label}</button>
        <button aria-label={"Close " + label}>
          <svg viewBox="0 0 10 10" className="h-2.5 w-2.5"><path d="m1 1 8 8M9 1 1 9" stroke="#8e9db2" strokeWidth="1.600" /></svg>
        </button>
      </div>
    </div>
  );
}

function Workspace() {
  return (
    <main className="flex min-w-0 flex-1 flex-col">
      <div className="flex h-6 shrink-0 items-end pl-[5px]">
        <DocTab label="BINRY-1 (BINARY) - Input" />
        <DocTab label="BINRY-1 (Binary) - T-xy - Plot" active />
        <button aria-label="New tab" className="mb-0.5 ml-1.5 flex h-4 w-4 items-center justify-center rounded-xs bg-[#eef4fa]">
          <svg viewBox="0 0 12 12" className="h-3 w-3"><path d="M6 0v12M0 6h12" stroke="#111" strokeWidth="1.500" /></svg>
        </button>
        <button aria-label="Tab list" className="mb-2 ml-auto mr-0.5 flex text-[#1d3166]">
          <svg viewBox="0 0 12 6" className="h-[5px] w-3"><path d="M0 0h12L6 6z" fill="currentColor" /></svg>
        </button>
      </div>
      <div className="flex min-h-0 flex-1 rounded-sm border border-[#8ba1bc] bg-[#c5daf2] p-[3px]">
        <div className="flex min-w-0 flex-1 border border-[#7b8ea8] bg-white p-[3px]">
          <div className="min-w-0 flex-1 border border-[#7b8ea8] bg-white">
            <Chart />
          </div>
        </div>
      </div>
    </main>
  );
}

function StatusBar() {
  return (
    <footer className="flex h-9 shrink-0 items-center border-t border-[#8ba1bc] bg-linear-to-b from-[#d8e5f3] to-[#b0c4da] pl-1 pr-1 text-[14px] text-[#1c1c1c]">
      <span className="w-[245px] shrink-0 whitespace-nowrap">Required Properties Input Complete</span>
      <button className="h-7 w-[116px] rounded-sm border border-[#707070] bg-linear-to-b from-[#f6f6f6] from-50% to-[#dcdcdc]">
        Check Status
      </button>
      <span className="ml-auto text-[#5b6878]">100%</span>
      <button aria-label="Zoom out" className="ml-[22px]">
        <svg viewBox="0 0 18 18" className="h-[18px] w-[18px]">
          <circle cx="9" cy="9" r="8" fill="#e2eaf2" stroke="#58636f" strokeWidth="1.200" />
          <path d="M4.500 9h9" stroke="#3b444f" strokeWidth="2.200" />
        </svg>
      </button>
      <input
        type="range"
        aria-label="Zoom"
        defaultValue="0"
        className="mb-1 ml-0.5 h-6 w-[160px] appearance-none bg-transparent [&::-webkit-slider-runnable-track]:h-1 [&::-webkit-slider-runnable-track]:border [&::-webkit-slider-runnable-track]:border-[#9cacbf] [&::-webkit-slider-runnable-track]:bg-[#e9eff6] [&::-webkit-slider-thumb]:-mt-2.5 [&::-webkit-slider-thumb]:h-[22px] [&::-webkit-slider-thumb]:w-3 [&::-webkit-slider-thumb]:appearance-none [&::-webkit-slider-thumb]:rounded-b-md [&::-webkit-slider-thumb]:rounded-t-xs [&::-webkit-slider-thumb]:border [&::-webkit-slider-thumb]:border-[#7d7d7d] [&::-webkit-slider-thumb]:bg-[#f1f1f1]"
      />
      <button aria-label="Zoom in" className="ml-0.5">
        <svg viewBox="0 0 18 18" className="h-[18px] w-[18px]">
          <circle cx="9" cy="9" r="8" fill="#e2eaf2" stroke="#58636f" strokeWidth="1.200" />
          <path d="M4.500 9h9M9 4.500v9" stroke="#3b444f" strokeWidth="2.200" />
        </svg>
      </button>
      <button aria-label="Fit to window" className="ml-2">
        <svg viewBox="0 0 20 20" className="h-5 w-5">
          <rect x="1" y="1" width="18" height="18" rx="2" fill="#dfe9f6" stroke="#5d84c0" strokeWidth="1.500" />
          <path d="M5 8V5h3M12 5h3v3M15 12v3h-3M8 15H5v-3" fill="none" stroke="#666" />
        </svg>
      </button>
    </footer>
  );
}

export default function App() {
  return (
    <div className="relative flex h-screen flex-col overflow-hidden bg-[#cfdfee] font-['Open_Sans','Noto_Sans_CJK_SC',sans-serif]">
      <TitleBar />
      <TabRow />
      <Ribbon />
      <div className="flex min-h-0 flex-1">
        <Sidebar />
        <Workspace />
      </div>
      <StatusBar />
      <div className="pointer-events-none absolute bottom-2 right-2 flex flex-col items-end whitespace-nowrap">
        <span className="mr-3.5 text-[16px] leading-6 text-[#6a5fdc]">bbs.hcbbs.com</span>
        <span className="mr-1.5 text-[22px] font-bold leading-5 text-[#7f7fe0] opacity-80 [text-shadow:0_0_2px_#fff]">海川化工论坛</span>
        <span className="-mt-2 text-[13px] leading-4 text-[#e6e619] [text-shadow:1px_1px_0_#222]">
          化海川流-工业社群@HCBBS
        </span>
      </div>
    </div>
  );
}
